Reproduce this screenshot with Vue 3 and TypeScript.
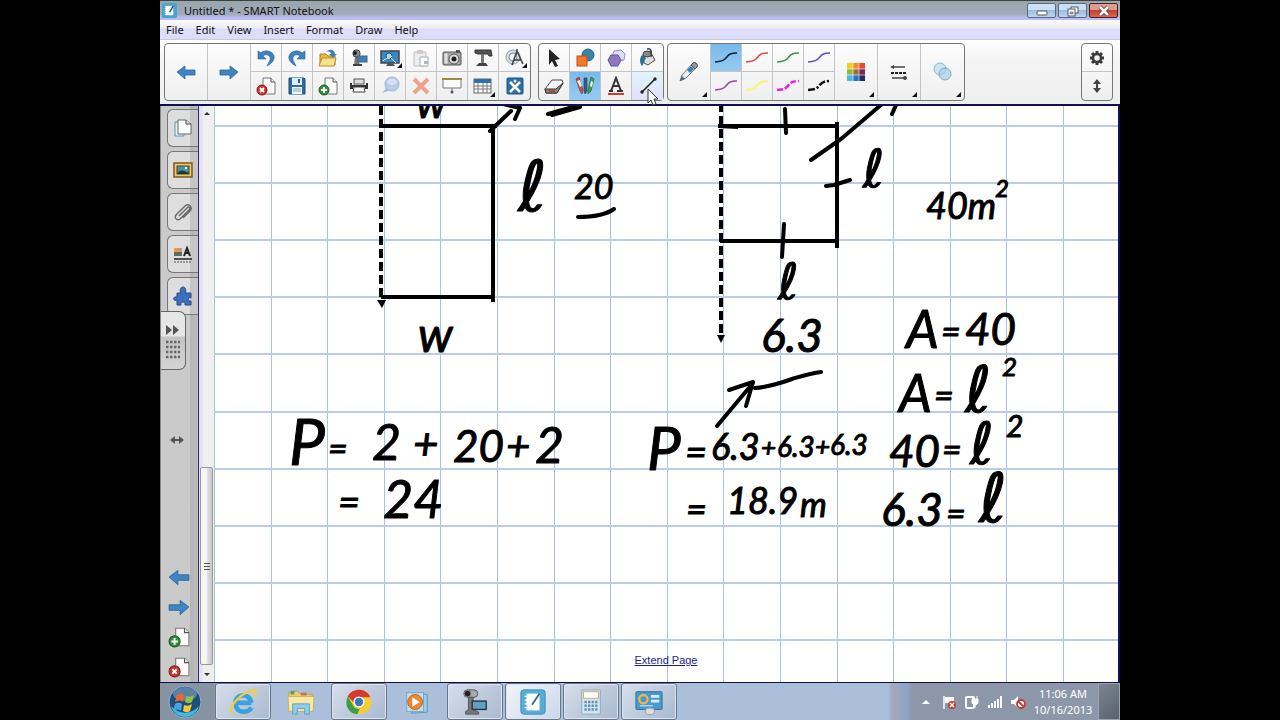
<script setup lang="ts">
interface Tool {
  name: string
  icon: string
  more?: boolean
  active?: boolean
  hover?: boolean
}

interface InkPart {
  t: string
  x: number
  y: number
  s: number
}

const menus: string[] = ['File', 'Edit', 'View', 'Insert', 'Format', 'Draw', 'Help']

const page = '<path d="M7 2h8l4 4v12H7z" fill="#fdfdfd" stroke="#777"/><path d="M15 2v4h4" fill="#eee" stroke="#555"/>'
const wave = (color: string, extra = ''): string =>
  `<path d="M0 14C5 13 7 14 10 11S13 5 22 5" fill="none" stroke="${color}" ${extra}/>`

const icons: Record<string, string> = {
  undo: '<path d="M2 3v8h8l-3-3c4-3 8 0 7 4-1 2-2 4-3 6 6-3 9-8 6-12-3-4-9-4-12-1z" fill="#3f82bd" stroke="#2c6598" stroke-width=".6"/>',
  redo: '<path d="M18 3v8h-8l3-3c-4-3-8 0-7 4 1 2 2 4 3 6-6-3-9-8-6-12 3-4 9-4 12-1z" fill="#3f82bd" stroke="#2c6598" stroke-width=".6"/>',
  open: '<path d="M2 6h6l2 2h7v9H2z" fill="#e8b93f" stroke="#a97f22"/><path d="M1 18l3-8h14l-2 8z" fill="#fbe08a" stroke="#b98f30"/><path d="M8 4c4-4 9-2 9 2h2l-4 4-4-4h2c0-2-2-3-5-2z" fill="#3f7fb8"/>',
  camera: '<path d="M6 8h4v7l3 3H5z" fill="#777"/><rect x="4" y="2" width="7" height="7" rx="3" fill="#8b8b8b" stroke="#444"/><circle cx="6" cy="5" r="2" fill="#222"/><rect x="9" y="8" width="9" height="6" fill="#3e7fb9" stroke="#49657a"/><rect x="4" y="16" width="9" height="2" fill="#444"/>',
  screen: '<rect x="1" y="3" width="18" height="12" fill="#3d87bf" stroke="#3b4650" stroke-width="1.5"/><circle cx="9" cy="8" r="3" fill="#a9d9f4" stroke="#1f547c"/><path d="M11 10l5 5M3 13c3-4 6-1 9-5" stroke="#e2f1fa" fill="none"/><path d="M6 18h9l-2-3H8z" fill="#555"/>',
  paste: '<rect x="3" y="4" width="12" height="14" rx="1" fill="#eee" stroke="#bbb"/><rect x="6" y="2" width="6" height="4" fill="#ccc"/><path d="M9 9h8v9H9z" fill="#fff" stroke="#aaa"/><path d="M13 13h4v3h-4z" fill="#a8b8c8"/>',
  photo: '<rect x="1" y="4" width="18" height="13" rx="1" fill="#a9a9a9" stroke="#555"/><rect x="2" y="5" width="4" height="11" fill="#e1e1e1" stroke="#777" stroke-width=".5"/><circle cx="12" cy="11" r="5" fill="#ddd" stroke="#555"/><circle cx="12" cy="11" r="2.5" fill="#222"/><rect x="14" y="2" width="4" height="3" fill="#555"/>',
  doc: '<path d="M2 2h16l1 6h-3l-1-2H5L2 5z" fill="#555" stroke="#333"/><path d="M8 6h3v9H8z" fill="#777"/><path d="M3 18l3-3h7l2 3z" fill="#444"/>',
  measure: '<circle cx="8" cy="9" r="7" fill="#d7dfe5" stroke="#8fa0aa"/><circle cx="8" cy="9" r="4" fill="#f3f6f8" stroke="#889"/><path d="M7 17L12 3l6 13M9 12h7M12 3V1" fill="none" stroke="#444" stroke-width="1.6"/>',
  delpage: page + '<circle cx="6" cy="14" r="5" fill="#c9362e" stroke="#8a1c17"/><path d="M4 12l4 4M8 12l-4 4" stroke="#fff" stroke-width="1.8"/>',
  save: '<path d="M2 2h15l1 1v15H2z" fill="#2d6d9b" stroke="#1e4f75"/><rect x="5" y="2" width="10" height="7" fill="#dcebf5"/><rect x="11" y="3" width="2" height="4" fill="#245f8a"/><rect x="5" y="11" width="10" height="7" fill="#eef3f6"/><path d="M6 13h8M6 15h8" stroke="#8aa"/>',
  addpage: page + '<circle cx="6" cy="14" r="5" fill="#2f8f3c" stroke="#1b5f26"/><path d="M3 14h6M6 11v6" stroke="#fff" stroke-width="1.8"/>',
  print: '<rect x="5" y="3" width="10" height="5" fill="#ddd" stroke="#555"/><path d="M1 7h2v2h14V7h2v6h-3v-2H4v2H1z" fill="#333"/><path d="M5 11h10l1 5H4z" fill="#f7f7f7" stroke="#444"/>',
  bubble: '<circle cx="12" cy="8" r="7" fill="#b9cdea" stroke="#9cb4da"/><ellipse cx="12" cy="6" rx="5" ry="3" fill="#d6e2f4"/><path d="M6 12l-4 5 7-2z" fill="#a9bfe0"/>',
  cross: '<path d="M3 3l14 14M17 3L3 17" stroke="#f0a18c" stroke-width="4"/>',
  shade: '<path d="M1 3h18v9H1z" fill="#fafafa" stroke="#777"/><path d="M0 3h20" stroke="#a08a40" stroke-width="2"/><path d="M10 12v3" stroke="#777"/><circle cx="10" cy="16" r="1.5" fill="#555"/>',
  table: '<rect x="1" y="3" width="17" height="14" fill="#fff" stroke="#666"/><rect x="1" y="3" width="17" height="4" fill="#2f6ea8"/><path d="M1 10h17M1 13h17M5 7v10M10 7v10M14 7v10" stroke="#777"/>',
  exchange: '<rect x="2" y="2" width="16" height="16" rx="1" fill="#2c6fa5" stroke="#1f547f"/><path d="M5 6l10 10M15 6L5 16" stroke="#fff" stroke-width="2.5"/><circle cx="10" cy="5" r="1.5" fill="#fff"/>',
  select: '<path d="M5 1l11 10-5 1 3 6-3 1-3-6-3 4z" fill="#222"/>',
  shapes: '<circle cx="13" cy="7" r="6" fill="#3a83ab" stroke="#276587"/><rect x="2" y="8" width="10" height="10" fill="#f5792a" stroke="#c04e12"/>',
  polygons: '<path d="M8 3l7-1 4 4-1 6-7 1-5-4z" fill="#dcdcf3" stroke="#8f8fc0"/><path d="M5 7h7l3 5-3 6H5l-3-6z" fill="#8d79bd" stroke="#65529a"/>',
  fill: '<path d="M5 6l7-3 5 9-7 5-4-2z" fill="#ddd" stroke="#555"/><ellipse cx="9" cy="6" rx="4" ry="3" fill="#888" stroke="#444"/><path d="M9 1c4-1 5 2 4 8" fill="none" stroke="#444" stroke-width="1.5"/><path d="M4 7c-3 3-2 9 0 11 2-2 2-6 4-8z" fill="#2e6d94"/>',
  eraser: '<path d="M1 13L8 4h10l1 3-6 10H2z" fill="#fafafa" stroke="#444"/><path d="M1 13h11l7-6-6 10H2z" fill="#888" stroke="#333"/><path d="M5 15h6" stroke="#b54a33" stroke-width="2"/>',
  pens: '<path d="M1 3l3-2 4 13-1 4-2-3z" fill="#d44a3e" stroke="#7c3530" stroke-width=".7"/><path d="M2 5l3-1 2 6-2 1z" fill="#f3f3f3"/><path d="M9 2h3v13l-2 3-1-3z" fill="#375f85" stroke="#29435e" stroke-width=".7"/><path d="M16 1l3 2-3 12-3 3v-4z" fill="#3fa34a" stroke="#22642b" stroke-width=".7"/><path d="M16 5l2 1-1 5-2-1z" fill="#f3f3f3"/>',
  text: '<path d="M3 15h4M11 15h6M5 15l5-13 5 13M7 10h6" fill="none" stroke="#333" stroke-width="2"/><path d="M2 18h16" stroke="#d33b2e" stroke-width="2"/>',
  line: '<path d="M4 16L17 3" stroke="#222" stroke-width="1.6"/><circle cx="4" cy="16" r="1.7" fill="#222"/><circle cx="17" cy="3" r="1.7" fill="#222"/>',
  pen: '<path d="M1 19l2-6L14 1c3-1 5 1 4 4L7 16z" fill="#eee" stroke="#777"/><path d="M12 3l2-2c3-1 5 1 4 4l-2 2z" fill="#999" stroke="#555"/><path d="M8 8l4-4 3 3-4 4z" fill="#3b7fb6"/><path d="M1 19l2-5 3 3z" fill="#3b6f9c"/>',
  palette:
    '<rect x="1" y="1" width="6" height="6" fill="#f9c91c"/><rect x="7" y="1" width="6" height="6" fill="#f28a2e"/><rect x="13" y="1" width="6" height="6" fill="#e5473a"/><rect x="1" y="7" width="6" height="6" fill="#8ebc3f"/><rect x="7" y="7" width="6" height="6" fill="#a26c3d"/><rect x="13" y="7" width="6" height="6" fill="#7a2754"/><rect x="1" y="13" width="6" height="6" fill="#45b8ee"/><rect x="7" y="13" width="6" height="6" fill="#2278bd"/><rect x="13" y="13" width="6" height="6" fill="#28286b"/><path d="M7 1v18M13 1v18M1 7h18M1 13h18" stroke="#fff" stroke-width=".6"/>',
  lines: '<path d="M3 5h13M3 16h13" stroke="#444" stroke-width="1.4"/><path d="M2 11h15" stroke="#222" stroke-width="2" stroke-dasharray="3 1"/><path d="M1 5l4-2v4z" fill="#444"/><circle cx="16" cy="16" r="2" fill="#444"/>',
  circles: '<circle cx="7" cy="7" r="6" fill="#cfe4f2" stroke="#86b5d4"/><circle cx="12" cy="12" r="6" fill="#a9cfe8" fill-opacity=".7" stroke="#76aace"/>',
  gear: '<path d="M10 3v14M3 10h14M5 5l10 10M15 5L5 15" stroke="#3c3c3c" stroke-width="3"/><circle cx="10" cy="10" r="4" fill="#f4f4f4" stroke="#3c3c3c" stroke-width="2.5"/>',
  updown: '<path d="M10 3l4 5h-3v4h3l-4 5-4-5h3V8H6z" fill="#444"/>',
  left: '<path d="M1 10l8-6v4h10v5H9v4z" fill="#3f85c4" stroke="#2e6595" stroke-width=".8"/>',
  right: '<path d="M19 10l-8-6v4H1v5h10v4z" fill="#3f85c4" stroke="#2e6595" stroke-width=".8"/>',
  pages: '<path d="M2 4h9v14H2z" fill="#dff1f5" stroke="#5899a5"/><path d="M5 2h8l5 4v10H5z" fill="#fff" stroke="#666"/><path d="M13 2v4h5" fill="#ddd" stroke="#444"/>',
  gallery: '<rect x="1" y="3" width="18" height="14" fill="#e9c876" stroke="#83571d" stroke-width="1.5"/><rect x="4" y="6" width="12" height="8" fill="#4b93a9" stroke="#563f18"/><path d="M4 14c3-5 6-4 12-1v1z" fill="#173c32"/><circle cx="13" cy="8" r="1.2" fill="#fff"/>',
  clip: '<path d="M6 14l8-8c2-2 4 0 2 2l-9 9c-3 2-6-1-4-4l9-9c4-3 8 1 5 5l-7 7" fill="none" stroke="#666" stroke-width="1.4"/>',
  props: '<rect x="1" y="4" width="8" height="8" fill="#666"/><path d="M1 4h4v4H1z" fill="#e99a42"/><path d="M5 4h4v4H5z" fill="#bc9f83"/><path d="M11 12l3-8 3 8M12 9h4" fill="none" stroke="#222" stroke-width="2"/><path d="M1 15h18" stroke="#222" stroke-width="1.5"/><path d="M1 18h18" stroke="#555" stroke-dasharray="2 1"/>',
  puzzle: '<path d="M4 7h4c-2-3 0-6 2-6s4 3 2 6h6v5c-3-2-4 4 0 3v4h-6c1-4-5-4-4 0H4v-5c-4 2-5-4 0-3z" fill="#3c6fbd" stroke="#244b8c"/>',
}

const rowsOne: Tool[] = [
  { name: 'Undo', icon: 'undo' },
  { name: 'Redo', icon: 'redo' },
  { name: 'Open', icon: 'open' },
  { name: 'Document camera', icon: 'camera' },
  { name: 'View screens', icon: 'screen', more: true },
  { name: 'Paste', icon: 'paste' },
  { name: 'Capture', icon: 'photo' },
  { name: 'Visualizer', icon: 'doc' },
  { name: 'Measurement', icon: 'measure', more: true },
  { name: 'Delete page', icon: 'delpage' },
  { name: 'Save', icon: 'save' },
  { name: 'Add page', icon: 'addpage' },
  { name: 'Print', icon: 'print' },
  { name: 'Comment', icon: 'bubble' },
  { name: 'Delete', icon: 'cross' },
  { name: 'Screen shade', icon: 'shade' },
  { name: 'Table', icon: 'table', more: true },
  { name: 'Exchange', icon: 'exchange' },
]

const rowsTwo: Tool[] = [
  { name: 'Select', icon: 'select' },
  { name: 'Shapes', icon: 'shapes' },
  { name: 'Regular polygons', icon: 'polygons' },
  { name: 'Fill', icon: 'fill' },
  { name: 'Eraser', icon: 'eraser' },
  { name: 'Pens', icon: 'pens', active: true },
  { name: 'Text', icon: 'text' },
  { name: 'Lines', icon: 'line', hover: true },
]

const penLines: { name: string; art: string; active?: boolean }[] = [
  { name: 'Black pen', art: wave('#123', 'stroke-width="1.6"'), active: true },
  { name: 'Red pen', art: wave('#e0474c', 'stroke-width="1.6"') },
  { name: 'Green pen', art: wave('#3d9150', 'stroke-width="1.6"') },
  { name: 'Blue pen', art: wave('#5a50c8', 'stroke-width="1.6"') },
  { name: 'Purple pen', art: wave('#a0489c', 'stroke-width="1.6"') },
  { name: 'Yellow highlighter', art: wave('#f7f48a', 'stroke-width="2.5"') },
  { name: 'Magenta dashed pen', art: wave('#e81fe0', 'stroke-width="2.5" stroke-dasharray="6 2"') },
  { name: 'Black dashed pen', art: wave('#111', 'stroke-width="2.5" stroke-dasharray="7 2 2 2"') },
]

const wideTools: Tool[] = [
  { name: 'Colour', icon: 'palette', more: true },
  { name: 'Line style', icon: 'lines', more: true },
  { name: 'Transparency', icon: 'circles', more: true },
]

const tabs: Tool[] = [
  { name: 'Page Sorter', icon: 'pages' },
  { name: 'Gallery', icon: 'gallery' },
  { name: 'Attachments', icon: 'clip' },
  { name: 'Properties', icon: 'props' },
  { name: 'Add-ons', icon: 'puzzle' },
]

const pageTools: Tool[] = [
  { name: 'Previous page', icon: 'left' },
  { name: 'Next page', icon: 'right' },
  { name: 'Add page', icon: 'addpage' },
  { name: 'Delete page', icon: 'delpage' },
]

const gridX: number[] = Array.from({ length: 16 }, (_, i) => Math.round(214 + i * 56.6))
const gridY: number[] = Array.from({ length: 10 }, (_, i) => 126 + Math.round(i * 57.1))

const ink: InkPart[][] = [
  [{ t: 'w', x: 416, y: 118, s: 42 }],
  [{ t: 'ℓ', x: 518, y: 211, s: 70 }],
  [{ t: '20', x: 574, y: 199, s: 34 }],
  [{ t: 'w', x: 418, y: 352, s: 48 }],
  [{ t: 'ℓ', x: 863, y: 187, s: 52 }],
  [
    { t: '40m', x: 926, y: 219, s: 36 },
    { t: '2', x: 995, y: 197, s: 24 },
  ],
  [{ t: 'ℓ', x: 778, y: 299, s: 50 }],
  [{ t: '6.3', x: 761, y: 352, s: 46 }],
  [
    { t: 'A', x: 906, y: 348, s: 52 },
    { t: '=', x: 941, y: 344, s: 34 },
    { t: '40', x: 965, y: 345, s: 44 },
  ],
  [
    { t: 'A', x: 899, y: 412, s: 52 },
    { t: '=', x: 934, y: 408, s: 34 },
    { t: 'ℓ', x: 965, y: 412, s: 64 },
    { t: '2', x: 1002, y: 376, s: 26 },
  ],
  [
    { t: '40', x: 889, y: 467, s: 44 },
    { t: '=', x: 942, y: 462, s: 34 },
    { t: 'ℓ', x: 970, y: 464, s: 58 },
    { t: '2', x: 1006, y: 437, s: 30 },
  ],
  [
    { t: '6.3', x: 881, y: 526, s: 46 },
    { t: '=', x: 946, y: 526, s: 34 },
    { t: 'ℓ', x: 979, y: 522, s: 68 },
  ],
  [
    { t: 'P', x: 289, y: 465, s: 64 },
    { t: '=', x: 328, y: 461, s: 34 },
    { t: '2', x: 372, y: 460, s: 50 },
    { t: '+', x: 413, y: 460, s: 44 },
    { t: '20', x: 453, y: 462, s: 44 },
    { t: '+', x: 506, y: 461, s: 42 },
    { t: '2', x: 535, y: 463, s: 50 },
  ],
  [
    { t: '=', x: 338, y: 516, s: 38 },
    { t: '24', x: 383, y: 518, s: 52 },
  ],
  [
    { t: 'P', x: 647, y: 470, s: 60 },
    { t: '=', x: 685, y: 466, s: 38 },
    { t: '6.3', x: 711, y: 460, s: 36 },
    { t: '+', x: 761, y: 457, s: 26 },
    { t: '6.3', x: 777, y: 457, s: 28 },
    { t: '+', x: 815, y: 456, s: 26 },
    { t: '6.3', x: 830, y: 455, s: 28 },
  ],
  [
    { t: '=', x: 686, y: 522, s: 36 },
    { t: '18.9', x: 727, y: 514, s: 36 },
    { t: 'm', x: 800, y: 517, s: 34 },
  ],
]
</script>

<template>
  <div class="stage">
    <div class="window">
      <header class="titlebar">
        <svg class="app-icon" viewBox="0 0 16 16" aria-hidden="true">
          <rect width="16" height="16" rx="2" fill="#43a6cd" />
          <rect x="4" y="3" width="8" height="10" fill="#fff" />
          <path d="M8 10l4-7" stroke="#357" stroke-width="1.5" />
          <path d="M3 4h2M3 6h2M3 8h2M3 10h2M3 12h2" stroke="#fff" />
        </svg>
        <h1>Untitled * - SMART Notebook</h1>
        <div class="controls">
          <button aria-label="Minimize">
            <svg viewBox="0 0 20 12"><rect x="5" y="6" width="10" height="4" rx="1" fill="#fff" stroke="#556" /></svg>
          </button>
          <button aria-label="Restore">
            <svg viewBox="0 0 20 12">
              <rect x="8" y="2" width="7" height="6" fill="#fff" stroke="#556" />
              <rect x="5" y="4" width="7" height="7" fill="#fff" stroke="#556" />
              <rect x="7" y="7" width="3" height="2" fill="#8ac" stroke="#556" stroke-width=".5" />
            </svg>
          </button>
          <button class="close" aria-label="Close">
            <svg viewBox="0 0 20 12">
              <path d="M6 2l8 8M14 2l-8 8" stroke="#534" stroke-width="4" />
              <path d="M6 2l8 8M14 2l-8 8" stroke="#fff" stroke-width="2.5" />
            </svg>
          </button>
        </div>
      </header>

      <nav class="menubar">
        <button v-for="m in menus" :key="m">{{ m }}</button>
      </nav>

      <div class="toolbar">
        <div class="group main-group">
          <button class="wide" aria-label="Previous page"><svg viewBox="0 0 20 20" v-html="icons.left"></svg></button>
          <button class="wide" aria-label="Next page"><svg viewBox="0 0 20 20" v-html="icons.right"></svg></button>
          <div class="cells nine">
            <button v-for="t in rowsOne" :key="t.name" :class="{ more: t.more }" :aria-label="t.name">
              <svg viewBox="0 0 20 20" v-html="icons[t.icon]"></svg>
            </button>
          </div>
        </div>
        <div class="group tool-group">
          <div class="cells">
            <button
              v-for="t in rowsTwo"
              :key="t.name"
              :class="{ active: t.active, hover: t.hover }"
              :aria-label="t.name"
            >
              <svg viewBox="0 0 20 20" v-html="icons[t.icon]"></svg>
              <svg v-if="t.hover" class="pointer" viewBox="0 0 12 18" aria-hidden="true">
                <path d="M1 1v14l3-3 2 5 3-1-2-5h4z" fill="#fff" stroke="#333" />
              </svg>
            </button>
          </div>
        </div>
        <div class="group">
          <button class="wide more" aria-label="Pen type"><svg viewBox="0 0 20 20" v-html="icons.pen"></svg></button>
          <div class="cells pen-cells">
            <button v-for="p in penLines" :key="p.name" :class="{ active: p.active }" :aria-label="p.name">
              <svg class="stroke" viewBox="0 0 22 20" v-html="p.art"></svg>
            </button>
          </div>
          <button v-for="t in wideTools" :key="t.name" class="wide more" :aria-label="t.name">
            <svg viewBox="0 0 20 20" v-html="icons[t.icon]"></svg>
          </button>
        </div>
        <div class="group settings">
          <div class="cells one">
            <button aria-label="Customize toolbar"><svg viewBox="0 0 20 20" v-html="icons.gear"></svg></button>
            <button aria-label="Move toolbar"><svg viewBox="0 0 20 20" v-html="icons.updown"></svg></button>
          </div>
        </div>
      </div>

      <div class="work">
        <aside class="sidebar">
          <div class="tabs">
            <button v-for="t in tabs" :key="t.name" class="tab" :aria-label="t.name">
              <svg viewBox="0 0 20 20" v-html="icons[t.icon]"></svg>
            </button>
            <button class="handle" aria-label="Move tabs">
              <svg viewBox="0 0 24 56">
                <path d="M5 12l6 5-6 5zM12 12l6 5-6 5z" fill="#555" />
                <path
                  d="M5 29h14M5 34h14M5 39h14M5 44h14"
                  stroke="#666"
                  stroke-width="2.5"
                  stroke-dasharray="2.5 1.5"
                />
              </svg>
            </button>
          </div>
          <svg class="resize" viewBox="0 0 14 10" aria-hidden="true">
            <path d="M0 5l5-4v3h4V1l5 4-5 4V6H5v3z" fill="#555" />
          </svg>
          <div class="page-tools">
            <button v-for="t in pageTools" :key="t.name" :aria-label="t.name">
              <svg viewBox="0 0 20 20" v-html="icons[t.icon]"></svg>
            </button>
          </div>
        </aside>

        <div class="scrollbar">
          <svg viewBox="0 0 8 5"><path d="M1 4l3-3 3 3z" fill="#333" /></svg>
          <div class="track"><div class="thumb"><i></i></div></div>
          <svg viewBox="0 0 8 5"><path d="M1 1l3 3 3-3z" fill="#333" /></svg>
        </div>

        <main class="canvas">
          <svg class="sheet" viewBox="214 106 904 576" preserveAspectRatio="xMinYMin meet">
            <g class="grid">
              <line v-for="x in gridX" :key="'x' + x" class="column" :x1="x" :x2="x" y1="106" y2="682" />
              <line v-for="y in gridY" :key="'y' + y" x1="214" x2="1118" :y1="y" :y2="y" />
            </g>
            <g class="figure">
              <path d="M381 106V298M721 103V336" stroke-dasharray="9 4" />
              <path d="M381 126H497M493 126V302M381 297H494" />
              <path d="M718 126l20 1M721 126H839M837 122V248M720 241H839" />
            </g>
            <path d="M377 300h9l-4 8zM717 335h8l-4 8z" fill="#000" />
            <g class="ink">
              <path d="M490 131l21-20M503 104l17 4-5 11" />
              <path d="M548 114l32-9M552 115l28-8" />
              <path d="M578 217c13 0 26-1 36-8" />
              <path d="M785 109l1 24M826 186l8-1 16-5M784 224l-2 33" />
              <path d="M811 160l30-21 27-23 14-12M892 114l5-11" />
              <path d="M717 426l36-43M729 390l24-8-7 24" />
              <path d="M755 388c14-1 26-5 37-9 10-3 19-6 29-7" />
            </g>
            <g class="writing">
              <text v-for="(line, i) in ink" :key="i">
                <tspan
                  v-for="(p, j) in line"
                  :key="j"
                  :class="{ loop: p.t === 'ℓ' }"
                  :x="p.x"
                  :y="p.y"
                  :font-size="p.s"
                >{{ p.t }}</tspan>
              </text>
            </g>
          </svg>
          <a class="extend" href="#">Extend Page</a>
        </main>
      </div>

      <footer class="taskbar">
        <button class="start" aria-label="Start">
          <svg viewBox="0 0 34 34">
            <circle cx="17" cy="17" r="16" fill="#1f4e78" stroke="#8fb4cf" />
            <path d="M3 21c8 9 20 9 28 0-2 7-7 11-14 11S5 28 3 21z" fill="#45b9dc" />
            <ellipse cx="17" cy="9" rx="12" ry="7" fill="#7fa3bf" opacity=".6" />
            <path d="M9 10c3-2 5-1 7 0l-1 7c-2-2-5-2-8 0z" fill="#ef6330" />
            <path d="M18 11c3 1 5 1 8-1l-2 7c-3 2-5 1-7 0z" fill="#8dc63f" />
            <path d="M7 19c3-2 5-1 7 0l-1 7c-2-2-5-2-8 0z" fill="#4aa3e0" />
            <path d="M16 20c3 1 5 1 8-1l-2 7c-3 2-5 1-7 0z" fill="#fbc830" />
          </svg>
        </button>
        <button class="task open" aria-label="Internet Explorer">
          <svg viewBox="0 0 30 30">
            <path d="M7 16h17M24 21c-3 6-16 7-17-4S22 4 24 16" fill="none" stroke="#3ba1dc" stroke-width="5" />
            <path d="M3 27C-2 22 12 4 28 2c2 2 0 5-2 7" fill="none" stroke="#f2cf35" stroke-width="2.5" />
          </svg>
        </button>
        <button class="task" aria-label="Windows Explorer">
          <svg viewBox="0 0 30 30">
            <path d="M2 5l9-2 2 3 14 1v17H2z" fill="#ead27b" stroke="#b9a14f" />
            <path d="M1 9h28l-1 16H2z" fill="#f9e9a4" stroke="#c7ae5b" />
            <path d="M4 3h4v4H4z" fill="#60a060" />
            <path d="M15 5h6v3h-6z" fill="#d16d55" />
            <path d="M6 28V17h18v11h-5v-6h-8v6z" fill="#8fcdec" stroke="#5b9fc4" />
          </svg>
        </button>
        <button class="task open" aria-label="Chrome">
          <svg viewBox="0 0 30 30">
            <circle cx="15" cy="15" r="13" fill="#f6ce32" />
            <path d="M3 9C8-1 24 0 27 10H15c-4 0-5 3-5 6z" fill="#d63a2d" />
            <path d="M3 9l7 12c2 1 4 2 6 1l-3 6C3 27-1 17 3 9z" fill="#3c9e48" />
            <circle cx="15" cy="15" r="6" fill="#fff" />
            <circle cx="15" cy="15" r="4.5" fill="#3b77bd" />
          </svg>
        </button>
        <button class="task" aria-label="Media Player">
          <svg viewBox="0 0 30 30">
            <path d="M9 5l17 2v19l-17 1z" fill="#9ccbe5" stroke="#5797bc" />
            <rect x="4" y="5" width="18" height="20" fill="#c2dfee" stroke="#71a7c5" />
            <circle cx="13" cy="15" r="8" fill="#ef8630" stroke="#bd621c" />
            <path d="M10 10l8 5-8 5z" fill="#fff" />
          </svg>
        </button>
        <button class="task open" aria-label="Document camera">
          <svg viewBox="0 0 30 30">
            <rect x="3" y="2" width="15" height="8" rx="4" fill="#aaa" stroke="#555" />
            <circle cx="7" cy="6" r="3.5" fill="#222" stroke="#888" />
            <path d="M8 10h5v13l6 3v2H5v-3l3-2z" fill="#777" stroke="#555" />
            <rect x="12" y="14" width="15" height="9" fill="#5e9fc9" stroke="#333" stroke-width="1.5" />
          </svg>
        </button>
        <button class="task open front" aria-label="SMART Notebook">
          <svg viewBox="0 0 30 30">
            <rect x="2" y="2" width="26" height="26" rx="3" fill="#56aed7" stroke="#378cb5" />
            <rect x="8" y="6" width="14" height="18" fill="#fff" />
            <path d="M6 9h4M6 13h4M6 17h4M6 21h4" stroke="#fff" stroke-width="1.5" />
            <path d="M14 18l8-12" stroke="#346b8c" stroke-width="2" />
          </svg>
        </button>
        <button class="task open" aria-label="Calculator">
          <svg viewBox="0 0 30 30">
            <rect x="5" y="2" width="20" height="26" rx="1" fill="#d4e4f0" stroke="#83a8c7" />
            <rect x="7" y="4" width="16" height="7" fill="#fff" stroke="#e0a355" />
            <path d="M8 15h14M8 19h14M8 23h14" stroke="#5d90ba" stroke-width="2.5" stroke-dasharray="2.5 1.3" />
          </svg>
        </button>
        <button class="task open" aria-label="Control Panel">
          <svg viewBox="0 0 30 30">
            <rect x="1" y="4" width="28" height="19" rx="1" fill="#4799cf" stroke="#2b6d9e" />
            <circle cx="9" cy="12" r="4.5" fill="none" stroke="#f3b648" stroke-width="2.5" />
            <path d="M17 9h9M17 14h9" stroke="#d6effc" stroke-width="3" />
            <path d="M5 19h14" stroke="#a5d8f2" stroke-width="1.5" />
            <ellipse cx="16" cy="25" rx="5" ry="3.5" fill="#ddd" stroke="#999" />
          </svg>
        </button>
        <div class="tray">
          <svg viewBox="0 0 16 16"><path d="M4 10l4-4 4 4z" fill="#fff" /></svg>
          <svg viewBox="0 0 16 16">
            <path d="M3 2v13" stroke="#fff" stroke-width="1.5" />
            <path d="M4 3h9v6H4z" fill="#fff" />
            <circle cx="11" cy="11" r="4" fill="#c73a31" />
            <path d="M9 9l4 4M13 9l-4 4" stroke="#fff" stroke-width="1.5" />
          </svg>
          <svg viewBox="0 0 16 16">
            <rect x="2" y="3" width="8" height="11" rx="1" fill="none" stroke="#fff" stroke-width="2" />
            <path d="M8 5h6v4l-2 2h-2l-2-2zM9 2v3M13 2v3M11 11v3" fill="#fff" stroke="#fff" />
          </svg>
          <svg viewBox="0 0 16 16">
            <path d="M2 14v-3M5 14V9M8 14V7M11 14V5M14 14V2" stroke="#fff" stroke-width="2" />
          </svg>
          <svg viewBox="0 0 16 16">
            <path d="M1 6h3l4-4v12l-4-4H1z" fill="#fff" />
            <circle cx="11" cy="10" r="4" fill="#fff" stroke="#c73a31" stroke-width="1.8" />
            <path d="M8 7l6 6" stroke="#c73a31" stroke-width="1.8" />
          </svg>
        </div>
        <time class="clock"><span>11:06 AM</span><span>10/16/2013</span></time>
        <button class="desktop" aria-label="Show desktop"></button>
      </footer>
    </div>
  </div>
</template>

<style>
body {
  background: #000;
}
</style>

<style scoped>
.stage {
  min-height: 100vh;
  display: flex;
  justify-content: center;
  background: #000;
  font-family: 'Noto Sans', 'Open Sans', sans-serif;
  font-size: 11px;
  color: #111;
}
.stage * {
  box-sizing: border-box;
}
button {
  margin: 0;
  padding: 0;
  border: 0;
  background: none;
  font: inherit;
  color: inherit;
}
svg {
  display: block;
}
.window {
  width: 75%;
  display: flex;
  flex-direction: column;
  background: #f0f0f0;
}
.titlebar {
  height: 20px;
  display: flex;
  align-items: center;
  gap: 7px;
  padding: 0 2px;
  border-top: 1px solid #3b4144;
  background: linear-gradient(#98a6ab, #a1abbb 70%, #b8b9ef 85%, #bcbcf2);
}
.app-icon {
  width: 15px;
  height: 15px;
}
h1 {
  margin: 0;
  flex: 1;
  font-size: 11px;
  line-height: 18px;
  font-weight: 400;
}
.controls {
  display: flex;
  gap: 2px;
}
.controls button {
  width: 29px;
  height: 15px;
  display: flex;
  align-items: center;
  justify-content: center;
  border: 1px solid #566a82;
  border-radius: 2px;
  background: linear-gradient(#cbe0f4 50%, #9dbbdc 50%, #bcd8f0);
}
.controls .close {
  border-color: #4b2327;
  background: linear-gradient(#dd9c8e 50%, #bd4332 50%, #d8694d);
}
.controls svg {
  width: 20px;
  height: 12px;
}
.menubar {
  height: 19px;
  display: flex;
  align-items: center;
  gap: 12px;
  padding: 0 6px;
  background: linear-gradient(#fafafa, #eeeef0 40%, #dddcfa 50%, #dedcfb);
}
.toolbar {
  height: 65px;
  display: flex;
  padding: 3px 7px 3px 4px;
  border-top: 1px solid #ccc;
  background: linear-gradient(#fff, #f4f4f4 30%, #efefef);
}
.group {
  height: 58px;
  display: flex;
  border: 1px solid #777;
  border-radius: 4px;
  background: linear-gradient(#fcfcfc, #efefef);
  overflow: hidden;
}
.main-group {
  margin-right: 7px;
}
.tool-group {
  margin-right: 3px;
  overflow: visible;
}
.settings {
  margin-left: auto;
}
.group button {
  position: relative;
  display: flex;
  align-items: center;
  justify-content: center;
  border-right: 1px solid #c4c4c4;
}
.group button svg {
  width: 20px;
  height: 20px;
}
.group button.wide {
  width: 43px;
}
.group > button:last-child,
.group > .cells:last-child button:nth-child(4n) {
  border-right: 0;
}
.cells {
  display: grid;
  grid-template-columns: repeat(4, 31px);
  grid-template-rows: 28px 28px;
}
.cells.nine {
  grid-template-columns: repeat(9, 31px);
}
.group > .cells.nine button:nth-child(4n) {
  border-right: 1px solid #c4c4c4;
}
.group > .cells.nine button:nth-child(9n) {
  border-right: 0;
}
.cells.one {
  grid-template-columns: 30px;
}
.cells.one button {
  border-right: 0;
}
.cells button {
  border-bottom: 1px solid #c4c4c4;
}
.cells.nine button:nth-child(n + 10),
.cells:not(.nine) button:nth-child(n + 5),
.cells.one button:last-child {
  border-bottom: 0;
}
.group button .stroke {
  width: 22px;
}
.more::after {
  content: '';
  position: absolute;
  right: 3px;
  bottom: 3px;
  border-left: 5px solid transparent;
  border-bottom: 5px solid #111;
}
.group .active {
  background: linear-gradient(#78b9ec, #94cbf3);
}
.group .hover {
  background: linear-gradient(#dff4f8, #e4dffc);
}
.group button .pointer {
  position: absolute;
  left: 15px;
  top: 16px;
  z-index: 2;
  width: 12px;
  height: 18px;
}
.work {
  flex: 1;
  display: flex;
  border-top: 2px solid #11104a;
}
.sidebar {
  width: 38px;
  flex: none;
  display: flex;
  flex-direction: column;
  align-items: flex-end;
  padding-top: 3px;
  border-left: 1px solid #888;
  background: linear-gradient(90deg, #cacaca 78%, #b4b4b4 80%, #bdbdbd);
}
.tabs {
  position: relative;
  display: flex;
  flex-direction: column;
  gap: 4px;
}
.tab {
  width: 31px;
  height: 38px;
  display: flex;
  align-items: center;
  justify-content: center;
  border: 1px solid #777;
  border-right: 0;
  border-radius: 6px 0 0 6px;
  background: linear-gradient(90deg, #dedede 72%, #c6c6c6 74%);
}
.tab svg,
.page-tools svg {
  width: 20px;
  height: 20px;
}
.handle {
  position: absolute;
  left: -6px;
  top: 202px;
  width: 25px;
  height: 59px;
  border: 1px solid #666;
  border-left: 0;
  border-radius: 0 7px 7px 0;
  background: linear-gradient(#e6e6e6 42%, #c4c4c4 44%, #d4d4d4);
}
.handle svg {
  width: 24px;
  height: 56px;
}
.resize {
  width: 14px;
  height: 10px;
  margin: 120px 14px 0 0;
}
.page-tools {
  margin-top: auto;
  padding-right: 7px;
  display: flex;
  flex-direction: column;
}
.page-tools button {
  width: 24px;
  height: 30px;
  display: flex;
  align-items: center;
  justify-content: center;
}
.page-tools svg {
  width: 22px;
  height: 22px;
}
.scrollbar {
  width: 16px;
  flex: none;
  display: flex;
  flex-direction: column;
  align-items: center;
  padding: 5px 0;
  border-left: 1px solid #332a80;
  background: linear-gradient(90deg, #e2e0fa 20%, #efefef 30%);
}
.scrollbar svg {
  width: 8px;
  height: 5px;
}
.track {
  flex: 1;
  align-self: stretch;
  display: flex;
  flex-direction: column;
  justify-content: flex-end;
  padding: 0 1px 7px;
}
.thumb {
  height: 36%;
  display: flex;
  align-items: center;
  justify-content: center;
  border: 1px solid #999;
  border-radius: 2px;
  background: linear-gradient(90deg, #f5f5f5 50%, #ddd 60%, #c8c8c8);
}
.thumb i {
  width: 6px;
  height: 7px;
  background: repeating-linear-gradient(#555 0 1px, transparent 1px 3px);
}
.canvas {
  position: relative;
  flex: 1;
  border-right: 2px solid #11105a;
  background: #fff;
  overflow: hidden;
}
.sheet {
  width: 100%;
  height: auto;
}
.grid line {
  stroke: #b9cee6;
  stroke-width: 2;
}
.grid .column {
  stroke: #a9c1e2;
  stroke-width: 1;
  shape-rendering: crispEdges;
}
.figure path {
  fill: none;
  stroke: #000;
  stroke-width: 4;
}
.ink path {
  fill: none;
  stroke: #000;
  stroke-width: 4;
  stroke-linecap: round;
  stroke-linejoin: round;
}
.writing {
  font-family: Lato, 'DejaVu Sans', sans-serif;
  font-style: italic;
  fill: #000;
  stroke: #000;
  stroke-width: 1;
  stroke-linejoin: round;
}
.writing .loop {
  font-family: 'DejaVu Sans', sans-serif;
  font-weight: 200;
  stroke-width: 1;
}
.extend {
  position: absolute;
  left: 50%;
  bottom: 15px;
  translate: -50% 0;
  font-family: 'Liberation Sans', Arial, sans-serif;
  font-size: 11px;
  line-height: 14px;
  color: #1c1c90;
}
.taskbar {
  height: 38px;
  display: flex;
  align-items: stretch;
  gap: 2px;
  border-top: 1px solid #11104a;
  background: linear-gradient(90deg, #8893a2 0 54px, #abbeda 60px 728px, #a2a8bc 732px 738px, #8fa5c6 742px 746px, #8c98aa 752px);
}
.start {
  width: 50px;
  margin-right: 3px;
  display: flex;
  align-items: center;
  justify-content: center;
}
.start svg {
  width: 34px;
  height: 34px;
}
.task {
  width: 56px;
  display: flex;
  align-items: center;
  justify-content: center;
  border: 1px solid transparent;
  border-radius: 3px;
}
.task svg {
  width: 28px;
  height: 28px;
}
.task.open {
  border-color: #66758a;
  background: linear-gradient(135deg, #d6deea, #a9b9d0);
  box-shadow: inset 0 0 0 1px #dde5f0;
}
.task.front {
  background: linear-gradient(135deg, #f1f5fa, #cbd7e8);
}
.tray {
  margin-left: auto;
  padding-right: 2px;
  display: flex;
  align-items: center;
  gap: 7px;
}
.tray svg {
  width: 16px;
  height: 16px;
}
.clock {
  width: 66px;
  display: flex;
  flex-direction: column;
  align-items: center;
  justify-content: center;
  line-height: 16px;
  color: #fff;
}
.desktop {
  width: 22px;
  border: 1px solid #9ba5b2;
  background: linear-gradient(135deg, #7c8592, #59616e);
}
</style>
